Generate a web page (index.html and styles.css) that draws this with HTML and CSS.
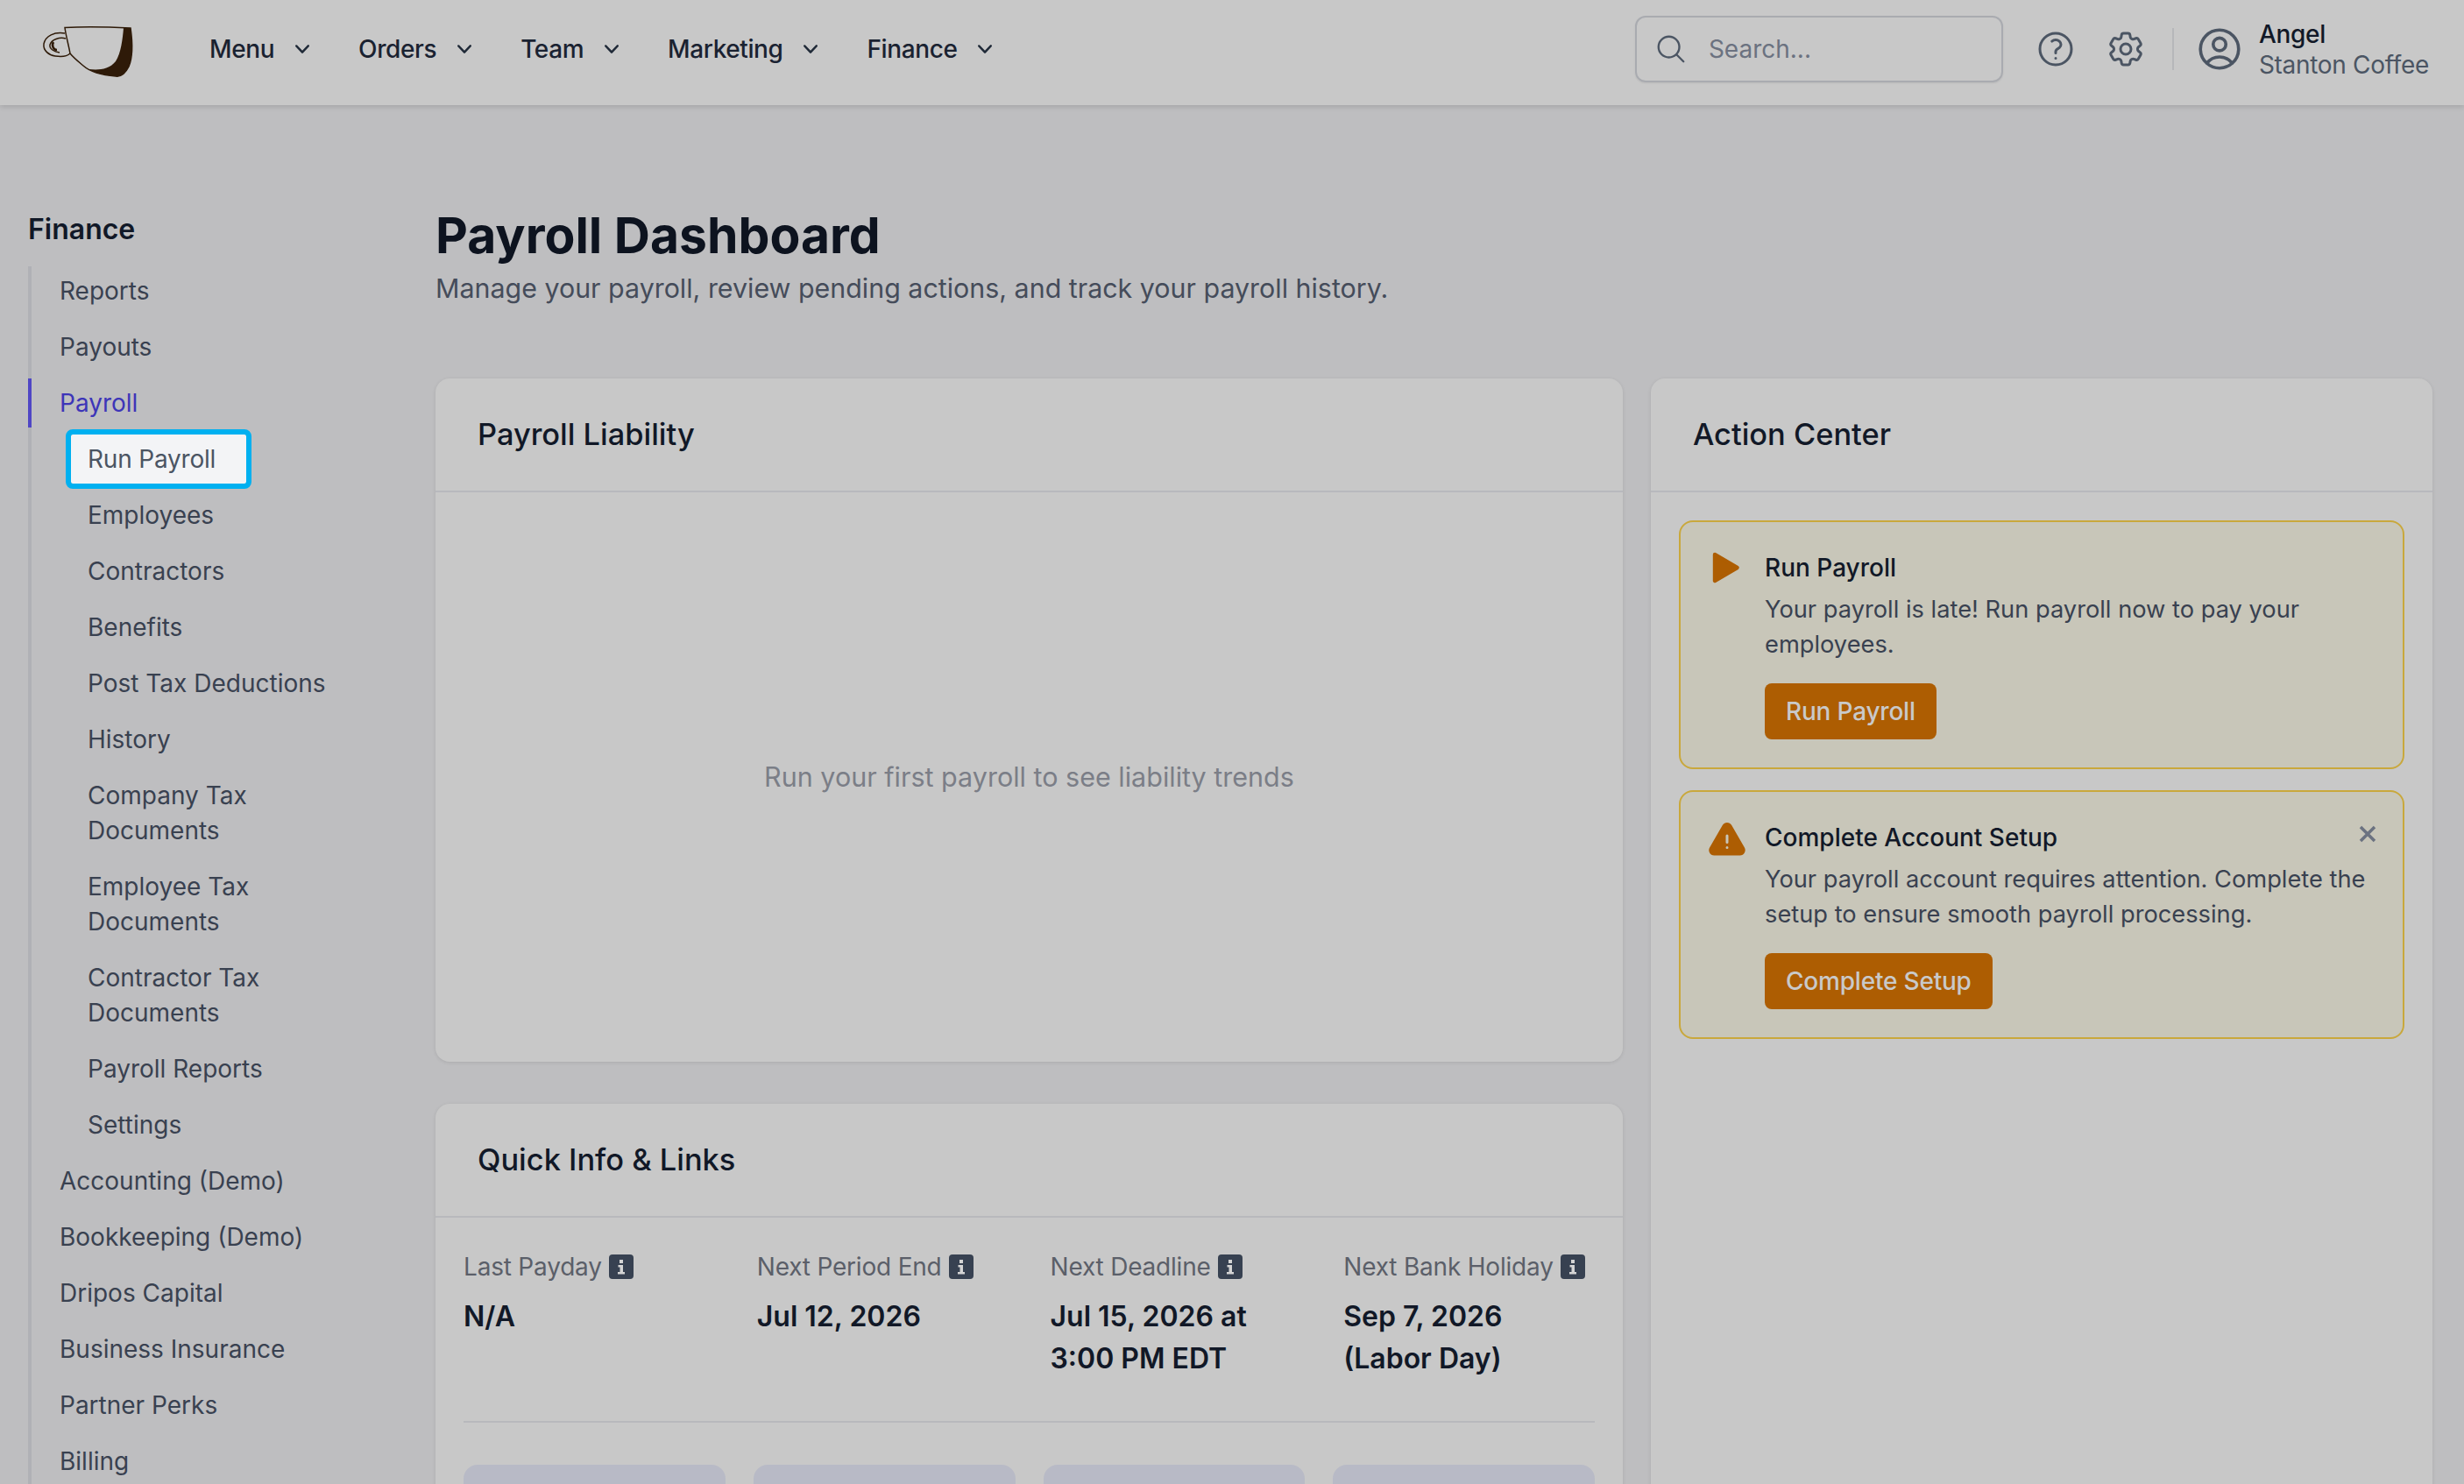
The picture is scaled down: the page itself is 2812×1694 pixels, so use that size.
FILE: index.html
```html
<!DOCTYPE html>
<html lang="en">
<head>
    <meta charset="UTF-8">
    <meta name="viewport" content="width=device-width, initial-scale=1.0">
    <title>Payroll Dashboard</title>
    <link rel="stylesheet" href="styles.css">
</head>
<body>
    <header class="topbar">
        <svg class="logo" viewBox="0 0 110 64" fill="none">
            <path d="M26 3.500C45 2.500 80 3 101 4C103 18 104 36 99 48C95 56 90 60 84 59C70 58 56 55 47 47C41 42 36 38 32 33C30 22 27 12 26 3.500Z" stroke="#2e1a08" stroke-width="1.500"/>
            <path d="M93 4L101 4C103 18 104 36 99 48C95 56 90 60 84 59C70 58 60 55 53 51C64 52 76 52 84 42C90 33 92 16 93 4Z" fill="#2e1a08"/>
            <path d="M26 10C14 8 4 13 2 22C1 30 8 35 15 36C22 37 28 37 32 33" stroke="#2e1a08" stroke-width="1.500"/>
            <path d="M27 16C20 14 11 17 9 23C8 28 14 31 20 32" stroke="#2e1a08" stroke-width="1.500"/>
            <path d="M13 20C10 25 14 29 17 29" stroke="#2e1a08" stroke-width="2.500"/>
        </svg>
        <nav class="topnav">
            <a class="topnav-item">Menu <svg class="chevron" viewBox="0 0 20 20"><path d="M5.23 7.21a.75.75 0 011.06.02L10 11.168l3.71-3.938a.75.75 0 111.08 1.04l-4.25 4.5a.75.75 0 01-1.08 0l-4.25-4.5a.75.75 0 01.02-1.06z"/></svg></a>
            <a class="topnav-item">Orders <svg class="chevron" viewBox="0 0 20 20"><path d="M5.23 7.21a.75.75 0 011.06.02L10 11.168l3.71-3.938a.75.75 0 111.08 1.04l-4.25 4.5a.75.75 0 01-1.08 0l-4.25-4.5a.75.75 0 01.02-1.06z"/></svg></a>
            <a class="topnav-item">Team <svg class="chevron" viewBox="0 0 20 20"><path d="M5.23 7.21a.75.75 0 011.06.02L10 11.168l3.71-3.938a.75.75 0 111.08 1.04l-4.25 4.5a.75.75 0 01-1.08 0l-4.25-4.5a.75.75 0 01.02-1.06z"/></svg></a>
            <a class="topnav-item">Marketing <svg class="chevron" viewBox="0 0 20 20"><path d="M5.23 7.21a.75.75 0 011.06.02L10 11.168l3.71-3.938a.75.75 0 111.08 1.04l-4.25 4.5a.75.75 0 01-1.08 0l-4.25-4.5a.75.75 0 01.02-1.06z"/></svg></a>
            <a class="topnav-item">Finance <svg class="chevron" viewBox="0 0 20 20"><path d="M5.23 7.21a.75.75 0 011.06.02L10 11.168l3.71-3.938a.75.75 0 111.08 1.04l-4.25 4.5a.75.75 0 01-1.08 0l-4.25-4.5a.75.75 0 01.02-1.06z"/></svg></a>
        </nav>
        <div class="topbar-right">
            <div class="search">
                <svg class="search-icon" viewBox="0 0 24 24" fill="none"><path d="M21 21l-5.197-5.197m0 0A7.5 7.5 0 105.196 5.196a7.5 7.5 0 0010.607 10.607z"/></svg>
                <span>Search...</span>
            </div>
            <svg class="top-icon help" viewBox="0 0 24 24" fill="none"><path d="M9.879 7.519c1.171-1.025 3.071-1.025 4.242 0 1.172 1.025 1.172 2.687 0 3.712-.203.179-.43.326-.67.442-.745.361-1.45.999-1.45 1.827v.75M21 12a9 9 0 11-18 0 9 9 0 0118 0zm-9 5.25h.008v.008H12v-.008z"/></svg>
            <svg class="top-icon gear" viewBox="0 0 24 24" fill="none"><path d="M9.594 3.94c.09-.542.56-.94 1.11-.94h2.593c.55 0 1.02.398 1.11.94l.213 1.281c.063.374.313.686.645.87.074.04.147.083.22.127.324.196.72.257 1.075.124l1.217-.456a1.125 1.125 0 011.37.49l1.296 2.247a1.125 1.125 0 01-.26 1.431l-1.003.827c-.293.24-.438.613-.431.992a6.759 6.759 0 010 .255c-.007.378.138.75.43.99l1.005.828c.424.35.534.954.26 1.43l-1.298 2.247a1.125 1.125 0 01-1.369.491l-1.217-.456c-.355-.133-.75-.072-1.076.124a6.57 6.57 0 01-.22.128c-.331.183-.581.495-.644.869l-.213 1.28c-.09.543-.56.941-1.11.941h-2.594c-.55 0-1.02-.398-1.11-.94l-.213-1.281c-.062-.374-.312-.686-.644-.87a6.52 6.52 0 01-.22-.127c-.325-.196-.72-.257-1.076-.124l-1.217.456a1.125 1.125 0 01-1.369-.49l-1.297-2.247a1.125 1.125 0 01.26-1.431l1.004-.827c.292-.24.437-.613.43-.992a6.932 6.932 0 010-.255c.007-.378-.138-.75-.43-.99l-1.004-.828a1.125 1.125 0 01-.26-1.43l1.297-2.247a1.125 1.125 0 011.37-.491l1.216.456c.356.133.751.072 1.076-.124.072-.044.146-.087.22-.128.332-.183.582-.495.644-.869l.214-1.281zM15 12a3 3 0 11-6 0 3 3 0 016 0z"/></svg>
            <div class="top-divider"></div>
            <svg class="top-icon user" viewBox="0 0 24 24" fill="none"><path d="M17.982 18.725A7.488 7.488 0 0012 15.75a7.488 7.488 0 00-5.982 2.975m11.963 0a9 9 0 10-11.963 0m11.963 0A8.966 8.966 0 0112 21a8.966 8.966 0 01-5.982-2.275M15 9.75a3 3 0 11-6 0 3 3 0 016 0z"/></svg>
            <div class="account">
                <div class="account-name">Angel</div>
                <div class="account-org">Stanton Coffee</div>
            </div>
        </div>
    </header>

    <div class="page">
        <aside class="sidebar">
            <h2 class="sidebar-title">Finance</h2>
            <ul class="side-list">
                <li class="side-item">Reports</li>
                <li class="side-item">Payouts</li>
                <li class="side-item active">Payroll</li>
                <li class="side-sub highlight">Run Payroll</li>
                <li class="side-sub">Employees</li>
                <li class="side-sub">Contractors</li>
                <li class="side-sub">Benefits</li>
                <li class="side-sub">Post Tax Deductions</li>
                <li class="side-sub">History</li>
                <li class="side-sub">Company Tax<br>Documents</li>
                <li class="side-sub">Employee Tax<br>Documents</li>
                <li class="side-sub">Contractor Tax<br>Documents</li>
                <li class="side-sub">Payroll Reports</li>
                <li class="side-sub">Settings</li>
                <li class="side-item">Accounting (Demo)</li>
                <li class="side-item">Bookkeeping (Demo)</li>
                <li class="side-item">Dripos Capital</li>
                <li class="side-item">Business Insurance</li>
                <li class="side-item">Partner Perks</li>
                <li class="side-item">Billing</li>
            </ul>
        </aside>

        <main class="content">
            <h1 class="page-title">Payroll Dashboard</h1>
            <p class="page-sub">Manage your payroll, review pending actions, and track your payroll history.</p>

            <div class="columns">
                <div class="col-left">
                    <section class="card">
                        <h3 class="card-head">Payroll Liability</h3>
                        <div class="empty-chart">Run your first payroll to see liability trends</div>
                    </section>

                    <section class="card">
                        <h3 class="card-head">Quick Info &amp; Links</h3>
                        <div class="quick-body">
                            <div class="quick-grid">
                                <div>
                                    <div class="quick-label">Last Payday <svg class="info" viewBox="0 0 28 28"><rect width="28" height="28" rx="4"/><path class="info-i" d="M12 6h4v4h-4zM10.500 12h5.500v8h2v2.500h-8V20h2.500v-5.500h-2z"/></svg></div>
                                    <div class="quick-value">N/A</div>
                                </div>
                                <div>
                                    <div class="quick-label">Next Period End <svg class="info" viewBox="0 0 28 28"><rect width="28" height="28" rx="4"/><path class="info-i" d="M12 6h4v4h-4zM10.500 12h5.500v8h2v2.500h-8V20h2.500v-5.500h-2z"/></svg></div>
                                    <div class="quick-value">Jul 12, 2026</div>
                                </div>
                                <div>
                                    <div class="quick-label">Next Deadline <svg class="info" viewBox="0 0 28 28"><rect width="28" height="28" rx="4"/><path class="info-i" d="M12 6h4v4h-4zM10.500 12h5.500v8h2v2.500h-8V20h2.500v-5.500h-2z"/></svg></div>
                                    <div class="quick-value">Jul 15, 2026 at<br>3:00 PM EDT</div>
                                </div>
                                <div>
                                    <div class="quick-label">Next Bank Holiday <svg class="info" viewBox="0 0 28 28"><rect width="28" height="28" rx="4"/><path class="info-i" d="M12 6h4v4h-4zM10.500 12h5.500v8h2v2.500h-8V20h2.500v-5.500h-2z"/></svg></div>
                                    <div class="quick-value">Sep 7, 2026<br>(Labor Day)</div>
                                </div>
                            </div>
                            <div class="skeleton-row">
                                <div class="skeleton"></div>
                                <div class="skeleton"></div>
                                <div class="skeleton"></div>
                                <div class="skeleton"></div>
                            </div>
                        </div>
                    </section>
                </div>

                <section class="card action-center">
                    <h3 class="card-head">Action Center</h3>
                    <div class="alerts">
                        <div class="alert">
                            <svg class="alert-icon play" viewBox="0 0 24 24"><path d="M4 4.500L16.800 12L4 19.500Z" stroke-width="2.200" stroke-linejoin="round"/></svg>
                            <div class="alert-text">
                                <div class="alert-title">Run Payroll</div>
                                <p class="alert-body">Your payroll is late! Run payroll now to pay your employees.</p>
                                <button class="alert-btn">Run Payroll</button>
                            </div>
                        </div>
                        <div class="alert">
                            <svg class="alert-icon warn" viewBox="0 0 24 24"><path fill-rule="evenodd" d="M9.401 3.003c1.155-2 4.043-2 5.197 0l7.355 12.748c1.154 2-.29 4.5-2.599 4.5H4.645c-2.309 0-3.752-2.5-2.598-4.5L9.4 3.003zM12 8.250a.75.75 0 01.75.75v3.750a.75.75 0 01-1.500 0V9a.75.75 0 01.75-.75zm0 8.250a.75.75 0 100-1.500.75.75 0 000 1.500z"/></svg>
                            <div class="alert-text">
                                <div class="alert-title">Complete Account Setup</div>
                                <p class="alert-body">Your payroll account requires attention. Complete the setup to ensure smooth payroll processing.</p>
                                <button class="alert-btn">Complete Setup</button>
                            </div>
                            <svg class="alert-close" viewBox="0 0 24 24" fill="none"><path d="M4 4l16 16M20 4L4 20"/></svg>
                        </div>
                    </div>
                </section>
            </div>
        </main>
    </div>
</body>
</html>
```

FILE: styles.css
```css
* {
    box-sizing: border-box;
}

html, body {
    margin: 0;
    height: 100%;
    overflow: hidden;
}

body {
    font-family: Inter, "Liberation Sans", sans-serif;
    font-size: 28px;
    line-height: 40px;
    color: #111827;
    background-color: #bebec0;
}

/* Top bar */
.topbar {
    display: flex;
    align-items: center;
    height: 120px;
    padding: 0 40px 8px 48px;
    background-color: #c8c8c8;
    box-shadow: 0 2px 6px rgba(0, 0, 0, 0.14);
}

.logo {
    width: 110px;
    height: 64px;
    margin-top: 8px;
    margin-right: 81px;
}

.topnav {
    display: flex;
    gap: 48px;
}

.topnav-item {
    display: flex;
    align-items: center;
    gap: 16px;
    font-weight: 500;
    letter-spacing: -0.4px;
    color: #1a2231;
}

.chevron {
    width: 32px;
    height: 32px;
    fill: #1f2937;
}

.topbar-right {
    display: flex;
    align-items: center;
    margin-left: auto;
}

.search {
    display: flex;
    align-items: center;
    gap: 24px;
    width: 420px;
    height: 76px;
    padding: 0 20px;
    border: 2px solid #a9abb0;
    border-radius: 12px;
    color: #6b7280;
    box-shadow: 0 1px 2px rgba(0, 0, 0, 0.08);
}

.search-icon {
    width: 38px;
    height: 38px;
    stroke: #4b5563;
    stroke-width: 1.5;
    stroke-linecap: round;
    stroke-linejoin: round;
}

.top-icon {
    stroke: #4b5563;
    stroke-width: 1.5;
    stroke-linecap: round;
    stroke-linejoin: round;
}

.help, .gear {
    width: 48px;
    height: 48px;
}

.help {
    margin-left: 36px;
}

.gear {
    margin-left: 32px;
}

.top-divider {
    width: 2px;
    height: 48px;
    margin: 0 23px 0 29px;
    background-color: #b6b7ba;
}

.user {
    width: 58px;
    height: 58px;
}

.account {
    margin-left: 16px;
    letter-spacing: -0.3px;
}

.account-name {
    height: 35px;
    line-height: 36px;
    font-weight: 500;
}

.account-org {
    line-height: 36px;
    color: #4b5563;
}

/* Layout */
.page {
    display: flex;
}

.sidebar {
    flex: 0 0 497px;
    padding: 122px 0 0 32px;
}

.sidebar-title {
    margin: 0 0 22px;
    font-size: 32px;
    line-height: 40px;
    font-weight: 600;
}

.side-list {
    display: flex;
    flex-direction: column;
    gap: 8px;
    width: 400px;
    margin: 0;
    padding: 0;
    list-style: none;
    border-left: 4px solid #b0b1b6;
}

.side-item, .side-sub {
    padding: 8px 16px 8px 32px;
    color: #394150;
}

.side-sub {
    align-self: flex-start;
    padding-left: 64px;
}

.side-item.active {
    margin-left: -4px;
    border-left: 4px solid #4f46c5;
    color: #3d35b8;
}

.side-sub.highlight {
    margin-left: 45px;
    padding: 8px 35px 8px 19px;
    letter-spacing: -0.2px;
    color: #4b5563;
    background-color: #f3f4f6;
    border-radius: 2px;
    outline: 6px solid #00b0f0;
}

/* Main content */
.content {
    flex: 1;
    padding: 113px 36px 0 0;
}

.page-title {
    margin: 0;
    font-size: 57px;
    line-height: 72px;
    font-weight: 700;
    color: #0d131f;
}

.page-sub {
    margin: 4px 0 83px;
    font-size: 30.4px;
    line-height: 40px;
    color: #454c5a;
}

.columns {
    display: flex;
    gap: 32px;
    align-items: stretch;
}

.col-left {
    display: flex;
    flex-direction: column;
    gap: 48px;
    width: 1355px;
}

.card {
    background-color: #c8c8c8;
    border-radius: 16px;
    box-shadow: 0 1px 4px rgba(0, 0, 0, 0.1);
}

.card-head {
    margin: 0;
    height: 130px;
    padding: 44px 48px 0;
    font-size: 34.4px;
    line-height: 40px;
    font-weight: 500;
    border-bottom: 2px solid #b8b9bd;
}

.empty-chart {
    display: flex;
    align-items: center;
    justify-content: center;
    height: 650px;
    font-size: 30.5px;
    color: #7b7e87;
}

.quick-body {
    padding: 36px 32px 0;
}

.quick-grid {
    display: grid;
    grid-template-columns: repeat(4, 1fr);
    gap: 48px;
    height: 198px;
    border-bottom: 2px solid #b8b9bd;
}

.quick-label {
    display: flex;
    align-items: center;
    gap: 8px;
    white-space: nowrap;
    letter-spacing: -0.2px;
    color: #5b5f69;
}

.info {
    width: 28px;
    height: 28px;
    fill: #374151;
}

.info-i {
    fill: #d4d4d4;
}

.quick-value {
    margin-top: 13px;
    font-size: 32px;
    line-height: 48px;
    font-weight: 600;
}

.skeleton-row {
    display: grid;
    grid-template-columns: repeat(4, 1fr);
    gap: 32px;
    margin-top: 48px;
}

.skeleton {
    height: 200px;
    background-color: #b8bac6;
    border-radius: 16px;
}

.action-center {
    flex: 1;
}

.alerts {
    display: flex;
    flex-direction: column;
    gap: 24px;
    padding: 32px;
}

.alert {
    position: relative;
    display: flex;
    gap: 16px;
    height: 284px;
    padding: 32px 32px 0;
    background-color: #c8c6b9;
    border: 2px solid #c9a83c;
    border-radius: 16px;
}

.alert-icon {
    flex: 0 0 48px;
    width: 48px;
    height: 48px;
    fill: #ad5d02;
    stroke: #ad5d02;
}

.alert-icon.play {
    margin-top: -4px;
    margin-left: -1px;
    margin-right: 1px;
}

.alert-icon.warn {
    margin-left: -3px;
    margin-right: 3px;
    stroke: none;
}

.alert-title {
    font-weight: 500;
}

.alert-body {
    margin: 8px 0 24px;
    font-size: 27.25px;
    color: #394150;
}

.alert-btn {
    height: 64px;
    padding: 0 24px;
    font: inherit;
    font-weight: 500;
    letter-spacing: -0.2px;
    color: #c9c9c9;
    background-color: #ad5d02;
    border: none;
    border-radius: 8px;
}

.alert-close {
    position: absolute;
    top: 36px;
    right: 28px;
    width: 24px;
    height: 24px;
    stroke: #6b7280;
    stroke-width: 3.5;
}
```
